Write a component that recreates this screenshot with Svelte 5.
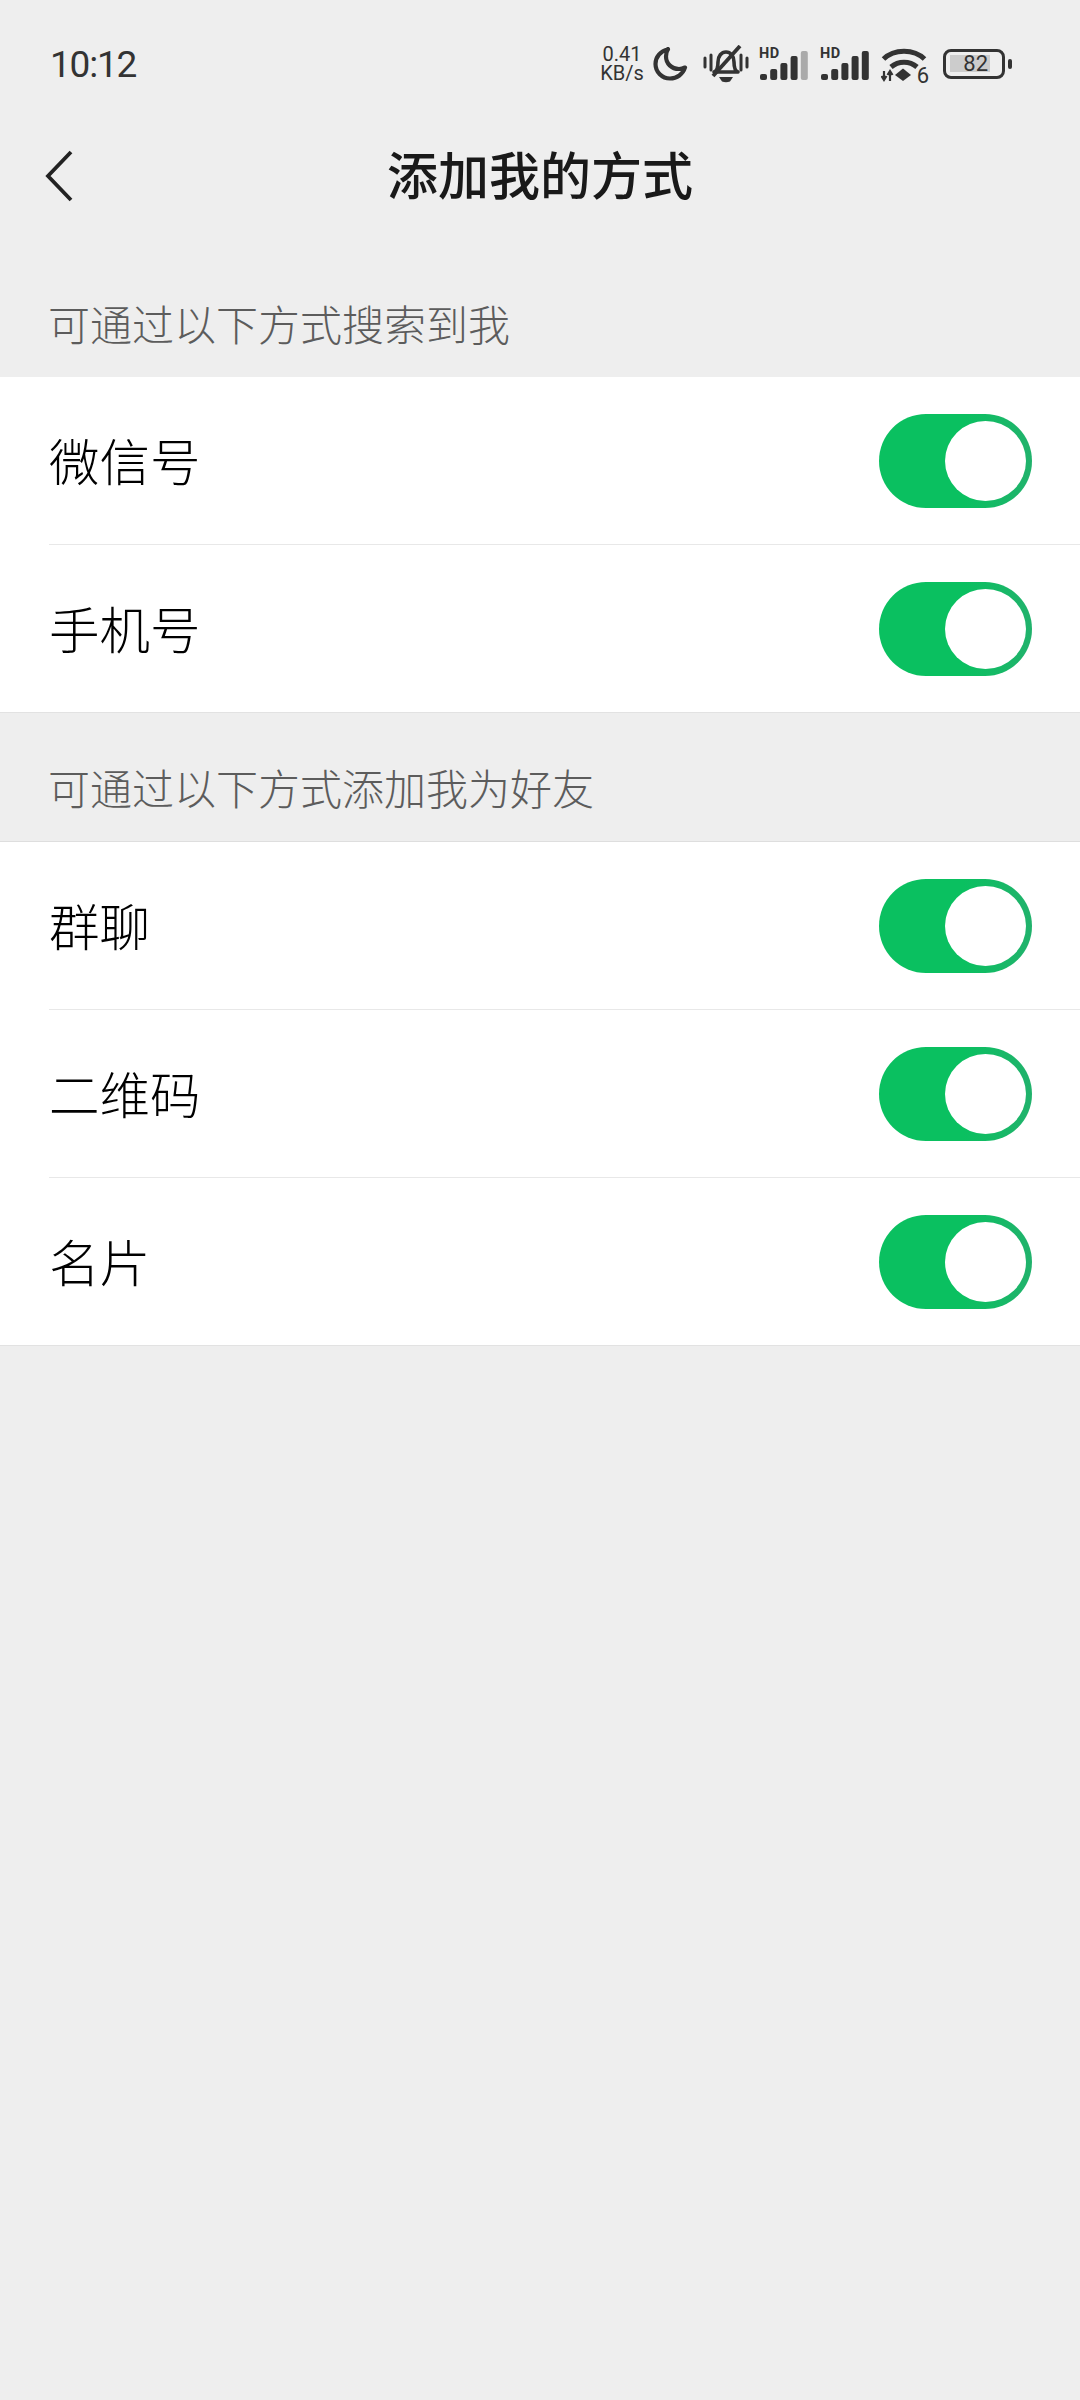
<script>
  const groups = [
    { label: "可通过以下方式搜索到我", rows: ["微信号", "手机号"] },
    { label: "可通过以下方式添加我为好友", rows: ["群聊", "二维码", "名片"] },
  ];
  const barHeights = [6, 11, 17, 24, 29];
</script>

<div class="page">
  <div class="statusbar">
    <span class="time">10:12</span>
    <div class="icons">
      <div class="speed"><span>0.41</span><span>KB/s</span></div>

      <svg class="moon" width="35" height="34" viewBox="0 0 35 34">
        <path d="M15 2.500C7.500 4 2.500 10 2.500 17c0 8 6.500 14.500 14.500 14.500 7 0 13-4.500 15-11-2 1-4 1.500-6 1.500-7.500 0-13-5.500-13-12.500 0-2.500 .5-5 2-7.500z" fill="none" stroke="#333" stroke-width="4.200" stroke-linejoin="round" />
      </svg>

      <svg class="bell" width="46" height="38" viewBox="0 0 46 38">
        <path d="M2 13v9M8 10v15M38 10v15M44 13v9" stroke="#333" stroke-width="3" stroke-linecap="round" fill="none" />
        <path d="M11 27c3-1 4-4 4-10 0-6 3.500-10 8-10s8 4 8 10c0 6 1 9 4 10z" fill="none" stroke="#333" stroke-width="3.600" stroke-linejoin="round" />
        <path d="M10 31L37 1" stroke="#333" stroke-width="3.800" />
        <path d="M16 32h14l-3 4.500q-4 1.500-8 0z" fill="#333" />
      </svg>

      {#each ["#aaa", "#333"] as lastBar}
        <div class="signal">
          <b>HD</b>
          <svg width="48" height="30" viewBox="0 0 48 30">
            {#each barHeights as h, i}
              <rect
                x={i * 10.2}
                y={30 - h}
                width="7"
                height={h}
                rx="2"
                fill={i === 4 ? lastBar : "#333"}
              />
            {/each}
          </svg>
        </div>
      {/each}

      <div class="wifi">
        <svg width="46" height="38" viewBox="0 0 46 38">
          <path d="M2.500 14C13 3.500 33 3.500 43.500 14" fill="none" stroke="#333" stroke-width="5" />
          <path d="M10 22c7.500-6.500 18.500-6.500 26 0" fill="none" stroke="#333" stroke-width="5" />
          <path d="M22 23.500l8 6.500-8 6-8-6z" fill="#333" />
          <path d="M3 26v8M.5 31l2.500 4 2.500-4M9 36v-9M6.500 30l2.500-4 2.500 4" stroke="#333" stroke-width="2.200" fill="none" />
        </svg>
        <span>6</span>
      </div>

      <div class="battery">
        <div class="shell"><div class="fill">82</div></div>
        <div class="nub"></div>
      </div>
    </div>
  </div>

  <div class="nav">
    <svg class="back" width="30" height="52" viewBox="0 0 30 52">
      <path d="M27 2L4 26l23 24" fill="none" stroke="#222" stroke-width="3.800" />
    </svg>
    <h1>添加我的方式</h1>
  </div>

  {#each groups as group}
    <div class="label">{group.label}</div>
    <div class="group">
      {#each group.rows as row}
        <div class="row">
          <span>{row}</span>
          <div class="toggle"><div class="knob"></div></div>
        </div>
      {/each}
    </div>
  {/each}
</div>

<style>
  :global(body) {
    margin: 0;
    background: #eeeeee;
  }

  .page {
    height: 2400px;
    background: #eeeeee;
    font-family: "Noto Sans CJK SC", "Noto Sans", sans-serif;
    overflow: hidden;
  }

  .statusbar {
    height: 128px;
    display: flex;
    align-items: center;
    justify-content: space-between;
    padding: 0 68px 0 50px;
    color: #333;
  }

  .time {
    font-family: Roboto, sans-serif;
    font-size: 37px;
    letter-spacing: -1.200px;
  }

  .icons {
    display: flex;
    align-items: center;
  }

  .speed {
    display: flex;
    flex-direction: column;
    align-items: center;
    width: 42px;
    font-family: Roboto, sans-serif;
    font-size: 20px;
    line-height: 19px;
    margin-right: 10px;
  }

  .moon {
    margin-right: 15px;
  }

  .bell {
    margin-right: 10px;
  }

  .signal {
    position: relative;
    width: 48px;
    height: 32px;
    margin-right: 13px;
  }

  .signal b {
    position: absolute;
    left: 0;
    top: 0;
    font-family: Roboto, sans-serif;
    font-size: 14.500px;
    line-height: 11px;
    letter-spacing: 0.500px;
  }

  .signal svg {
    position: absolute;
    left: 1px;
    bottom: 0;
  }

  .wifi {
    position: relative;
    width: 46px;
    height: 38px;
    margin-right: 16px;
  }

  .wifi svg {
    display: block;
  }

  .wifi span {
    position: absolute;
    right: -2px;
    bottom: -2px;
    font-family: Roboto, sans-serif;
    font-size: 22px;
    line-height: 19px;
  }

  .battery {
    display: flex;
    align-items: center;
    gap: 3px;
  }

  .shell {
    width: 62px;
    height: 30px;
    box-sizing: border-box;
    border: 3.500px solid #333;
    border-radius: 8px;
    padding: 3px 4px;
  }

  .fill {
    width: 38px;
    height: 17px;
    padding-right: 2px;
    background: #cccccc;
    font-family: Roboto, sans-serif;
    font-size: 22px;
    line-height: 18px;
    text-align: right;
  }

  .nub {
    width: 4px;
    height: 10px;
    background: #333;
    border-radius: 2px;
  }

  .nav {
    height: 96px;
    position: relative;
    display: flex;
    align-items: center;
    justify-content: center;
  }

  .back {
    position: absolute;
    left: 44px;
    top: 22px;
  }

  h1 {
    margin: 0 0 5px;
    font-size: 51px;
    line-height: 91px;
    font-weight: 500;
    color: #191919;
  }

  .label {
    display: flex;
    align-items: flex-end;
    padding: 0 48px 28px;
    font-size: 42px;
    line-height: 52px;
    font-weight: 300;
    color: #5c5c5c;
  }

  .nav + .label {
    height: 125px;
  }

  .group + .label {
    height: 100px;
  }

  .group {
    background: #fff;
    border-bottom: 1px solid #e2e2e2;
  }

  .group + .label + .group {
    border-top: 1px solid #dedede;
  }

  .row {
    height: 167px;
    display: flex;
    align-items: center;
    justify-content: space-between;
    padding: 0 48px 0 49px;
    font-size: 50.500px;
    font-weight: 300;
    color: #000;
  }

  .row span {
    padding-bottom: 4px;
  }

  .row + .row {
    border-top: 1px solid #e8e8e8;
    margin-left: 49px;
    padding-left: 0;
  }

  .toggle {
    width: 153px;
    height: 94px;
    box-sizing: border-box;
    padding: 7px 6px;
    border-radius: 47px;
    background: linear-gradient(90deg, #0ac060 55%, #21b26c);
    display: flex;
    justify-content: flex-end;
  }

  .knob {
    width: 81px;
    height: 80px;
    border-radius: 50%;
    background: #fff;
  }
</style>
